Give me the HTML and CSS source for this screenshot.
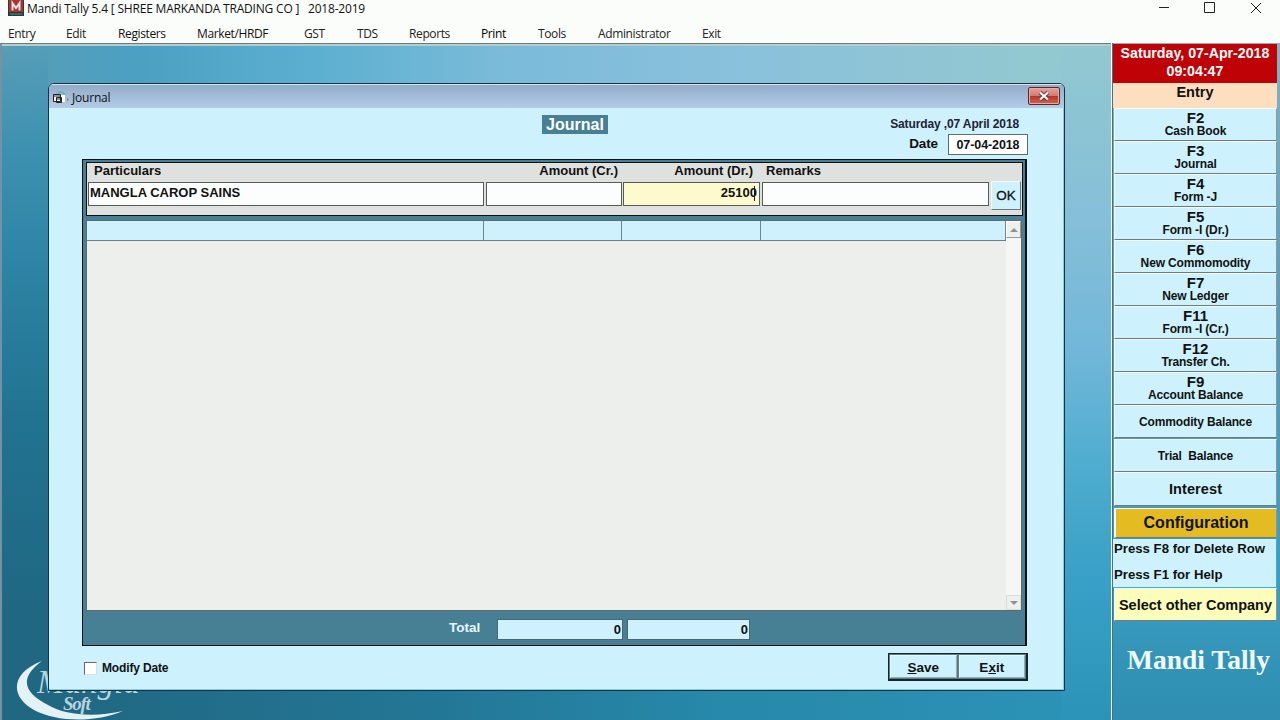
FILE: index.html
```
<!DOCTYPE html>
<html lang="en">
<head>
    <meta charset="UTF-8">
    <meta name="viewport" content="width=device-width, initial-scale=1.0">
    <title>Mandi Tally 5.4</title>
    <link rel="stylesheet" href="styles.css">
</head>
<body>
    <header class="titlebar">
        <svg class="app-icon" width="16" height="16" viewBox="0 0 16 16">
            <rect width="16" height="16" fill="#24403c"/>
            <rect x="1" y="0" width="14" height="12" fill="#a83238"/>
            <path d="M4.500 10.500V3l3.500 5L11.500 3v7.500" fill="none" stroke="#f3dedd" stroke-width="2"/>
            <path d="M2 14h12" stroke="#5d8a80"/>
        </svg>
        <span class="app-title">Mandi Tally 5.4 [ SHREE MARKANDA TRADING CO ]&nbsp;&nbsp; 2018-2019</span>
        <svg class="win-controls" width="104" height="16" viewBox="0 0 104 16">
            <path d="M1 7.500h10M46.500 2.500h10v10h-10zM93 3l10 10M103 3l-10 10" fill="none" stroke="#222"/>
        </svg>
    </header>
    <nav class="menu">
        <a class="m-entry">Entry</a>
        <a class="m-edit">Edit</a>
        <a class="m-registers">Registers</a>
        <a class="m-market">Market/HRDF</a>
        <a class="m-gst">GST</a>
        <a class="m-tds">TDS</a>
        <a class="m-reports">Reports</a>
        <a class="m-print">Print</a>
        <a class="m-tools">Tools</a>
        <a class="m-admin">Administrator</a>
        <a class="m-exit">Exit</a>
    </nav>

    <div class="main">
        <div class="desktop">
            <svg class="logo" width="150" height="65" viewBox="0 0 150 65">
                <path d="M42 6C10 18 10 42 34 55C56 67 95 68 123 56C96 62 66 61 48 50C22 37 20 22 42 6Z" fill="#e4f1f6"/>
                <text x="37" y="38" class="logo-name">Mangla</text>
                <text x="63" y="55" class="logo-soft">Soft</text>
            </svg>

            <section class="window">
                <div class="window-bar">
                    <svg width="18" height="14" viewBox="0 0 18 14">
                        <path d="M4 2.500q4-3 7 0l1 2" fill="none" stroke="#56b8bd" stroke-width="1.500"/>
                        <path d="M6 4h6v7H6z" fill="#fff"/>
                        <path d="M.5 3.500h7v7h-7zM.5 5h7M3.500 6.500h5v5h-5zM3.500 8h5" fill="#fff" stroke="#222"/>
                        <path d="M14 7l2 1.500-2 1.500z" fill="#697d90"/>
                    </svg>
                    <span class="window-name">Journal</span>
                    <button class="close">
                        <svg width="12" height="10" viewBox="0 0 12 10">
                            <path d="M2 1.500l8 7M10 1.500l-8 7" stroke="#6b3336" stroke-width="4"/>
                            <path d="M2 1.500l8 7M10 1.500l-8 7" stroke="#fff" stroke-width="2.200"/>
                        </svg>
                    </button>
                </div>

                <div class="window-body">
                    <div class="form-head">
                        <h1>Journal</h1>
                        <div class="dates">
                            <div class="long-date"><span>Saturday ,07 April 2018</span></div>
                            <div class="date-row">
                                <label>Date</label>
                                <div class="date-box"><span>07-04-2018</span></div>
                            </div>
                        </div>
                    </div>

                    <div class="panel">
                        <div class="entry-box">
                            <div class="labels">
                                <span class="c-part">Particulars</span>
                                <span class="c-cr">Amount (Cr.)</span>
                                <span class="c-dr">Amount (Dr.)</span>
                                <span class="c-rem">Remarks</span>
                            </div>
                            <div class="fields">
                                <div class="field f-part"><span>MANGLA CAROP SAINS</span></div>
                                <div class="field f-cr"></div>
                                <div class="field f-dr">25100<i class="caret"></i></div>
                                <div class="field f-rem"></div>
                                <button class="ok">OK</button>
                            </div>
                        </div>

                        <div class="grid">
                            <div class="grid-main">
                                <div class="grid-head">
                                    <div></div><div></div><div></div><div></div>
                                </div>
                            </div>
                            <div class="scroll">
                                <div class="arrow"><svg width="8" height="4"><path d="M0 4l4-4 4 4z" fill="#8f9391"/></svg></div>
                                <div class="arrow arrow-down"><svg width="8" height="4"><path d="M0 0l4 4 4-4z" fill="#8f9391"/></svg></div>
                            </div>
                        </div>

                        <div class="totals">
                            <span class="total-label">Total</span>
                            <div class="total t-cr">0</div>
                            <div class="total t-dr">0</div>
                        </div>
                    </div>

                    <div class="form-foot">
                        <span class="check"></span>
                        <label class="modify">Modify Date</label>
                        <div class="actions">
                            <button><u>S</u>ave</button>
                            <button>E<u>x</u>it</button>
                        </div>
                    </div>
                </div>
            </section>
        </div>

        <aside class="sidebar">
            <div class="clock"><span class="clock-date">Saturday, 07-Apr-2018</span><span class="clock-time">09:04:47</span></div>
            <div class="side-title">Entry</div>
            <button class="key"><b>F2</b><span>Cash Book</span></button>
            <button class="key"><b>F3</b><span>Journal</span></button>
            <button class="key"><b>F4</b><span>Form -J</span></button>
            <button class="key"><b>F5</b><span>Form -I (Dr.)</span></button>
            <button class="key"><b>F6</b><span>New Commomodity</span></button>
            <button class="key"><b>F7</b><span>New Ledger</span></button>
            <button class="key"><b>F11</b><span>Form -I (Cr.)</span></button>
            <button class="key"><b>F12</b><span>Transfer Ch.</span></button>
            <button class="key"><b>F9</b><span>Account Balance</span></button>
            <button class="key single">Commodity Balance</button>
            <button class="key single trial">Trial&nbsp; Balance</button>
            <button class="key single interest">Interest</button>
            <button class="key config">Configuration</button>
            <div class="hints"><span>Press F8 for Delete Row</span><span>Press F1 for Help</span></div>
            <button class="key company">Select other Company</button>
            <div class="brand">Mandi Tally</div>
        </aside>
    </div>
</body>
</html>
```
FILE: styles.css
```
* {
    box-sizing: border-box;
}
html, body {
    height: 100%;
    margin: 0;
    overflow: hidden;
}
body {
    display: flex;
    flex-direction: column;
    width: 1280px;
    height: 720px;
    background: #fbfdfb;
    color: #111;
    font-family: "Liberation Sans", Arial, sans-serif;
    font-size: 12px;
    font-weight: bold;
    white-space: nowrap;
}
button {
    font: inherit;
    color: inherit;
    padding: 0;
    margin: 0;
    border-radius: 0;
}
.titlebar {
    display: flex;
    align-items: flex-start;
    height: 18px;
    flex: none;
    padding-left: 8px;
    font: 12px/18px "Open Sans", "Noto Sans", sans-serif;
}
.app-title {
    margin-left: 3px;
    letter-spacing: -0.19px;
}
.win-controls {
    margin-left: auto;
    margin-right: 18px;
}
.menu {
    display: flex;
    flex: none;
    height: 25px;
    padding-left: 8px;
    font: 12px/31px "Open Sans", "Noto Sans", sans-serif;
    letter-spacing: -0.38px;
    color: #222;
}
.m-entry { width: 58px; }
.m-edit { width: 52px; }
.m-registers { width: 79px; color: #111; }
.m-market { width: 107px; color: #111; }
.m-gst { width: 53px; }
.m-tds { width: 52px; }
.m-reports { width: 72px; }
.m-print { width: 57px; color: #000; }
.m-tools { width: 60px; }
.m-admin { width: 104px; }

.main {
    display: flex;
    flex: 1;
    min-height: 0;
}
.desktop {
    position: relative;
    width: 1111px;
    border-top: 1px solid #6d7a7a;
    border-left: 2px solid #7392a6;
    box-shadow: inset 0 2px #b4cdcd;
    background:
        linear-gradient(180deg, rgba(75,155,185,0) 0%, #3e91b0 15%, #2f86a6 30%, #217391 55%, #206781 85%) left / 46px 100% no-repeat,
        linear-gradient(180deg, #92c8d0 0%, #86bfd8 25%, #72b7d9 45%, #4fadd0 62%, #389fc6 80%, #2c93b8 100%) right / 50px 100% no-repeat,
        linear-gradient(90deg, #206781 4%, #237695 38%, #2789ab 65%, #2c93b8 100%) bottom / 100% 40px no-repeat,
        linear-gradient(90deg, #5a9db5 0%, #4ba0c2 12%, #5cafd0 28%, #7abbd9 45%, #89c0dc 65%, #92c8d0 92%);
}

/* company logo, partly under the journal window */
.logo {
    position: absolute;
    left: -2px;
    top: 611px;
}
.logo-name {
    font: italic 33px "Liberation Serif", serif;
    fill: #b9d3dd;
}
.logo-soft {
    font: italic bold 19px "Liberation Serif", serif;
    letter-spacing: -1.3px;
    fill: #b9d3dd;
}

.window {
    position: absolute;
    left: 46px;
    top: 39px;
    width: 1017px;
    height: 608px;
    border: 1px solid #18333f;
    border-radius: 6px 6px 0 0;
    background: #cdf1fd;
    box-shadow: inset -1px -1px #8ccbdd;
    overflow: hidden;
}
.window-bar {
    display: flex;
    align-items: center;
    height: 24px;
    padding: 2px 4px 0 4px;
    border-top: 1px solid #d5e5ef;
    background: linear-gradient(#92acc9, #b4cce6);
}
.window-name {
    margin-left: 1px;
    font: 12px "Open Sans", "Noto Sans", sans-serif;
    letter-spacing: -0.2px;
}
.close {
    display: flex;
    align-items: center;
    justify-content: center;
    margin: -3px 0 0 auto;
    width: 32px;
    height: 18px;
    border: 1px solid #552a30;
    border-radius: 2px;
    background: linear-gradient(#e4a49b 0%, #d17b70 48%, #b83324 50%, #cf6552 100%);
    box-shadow: inset 0 0 0 1px #e7aaa0;
}
.window-body {
    padding: 0 36px 0 33px;
}
.form-head {
    display: flex;
    height: 51px;
}
h1 {
    width: 66px;
    height: 19px;
    margin: 7px 0 0 460px;
    background: #477f95;
    color: #fff;
    font-size: 16px;
    line-height: 19px;
    text-align: center;
}
.dates {
    margin-left: auto;
    width: 160px;
}
.long-date {
    height: 26px;
    padding-right: 9px;
    line-height: 33px;
    text-align: right;
    letter-spacing: -0.12px;
    color: #223;
}
.date-row {
    display: flex;
    justify-content: flex-end;
    font-size: 13.5px;
    letter-spacing: -0.1px;
    line-height: 20px;
}
.date-box {
    width: 80px;
    height: 21px;
    margin-left: 10px;
    border: 1px solid #5e6b70;
    background: #fff;
    font-size: 12.5px;
    text-align: center;
}
.panel {
    width: 945px;
    height: 487px;
    padding: 2px 3px 0;
    border: 1px solid #111;
    border-width: 1px 2px 1px 1px;
    background: #477f95;
}
.entry-box {
    width: 937px;
    height: 54px;
    border: 1px solid #111;
    background: #dfe1de;
}
.labels {
    display: flex;
    height: 19px;
    font-size: 13px;
    line-height: 16px;
}
.c-part { width: 398px; padding-left: 7px; }
.c-cr { width: 133px; text-align: right; }
.c-dr { width: 135px; text-align: right; }
.c-rem { margin-left: 13px; }
.fields {
    display: flex;
    padding-left: 1px;
}
.field {
    height: 24px;
    border: 1px solid #565c5c;
    background: #fcfefd;
    font-size: 13px;
    line-height: 19px;
    padding: 0 2px 0 1px;
}
.f-part { width: 396px; margin-right: 2px; }
.f-cr { width: 136px; margin-right: 1px; }
.f-dr { width: 137px; margin-right: 2px; background: #fdfbcd; text-align: right; position: relative; }
.f-rem { width: 227px; margin-right: 2px; }
.caret {
    position: absolute;
    right: 4px;
    top: 3px;
    width: 1px;
    height: 15px;
    background: #001e50;
}
.ok {
    width: 30px;
    height: 29px;
    margin-top: -1px;
    border: 1px solid;
    border-color: #f4fafa #6c7777 #6c7777 #f4fafa;
    background: #cdf1fd;
    font-size: 13.5px;
    font-weight: normal;
    -webkit-text-stroke: 0.3px #111;
}
.grid {
    display: flex;
    width: 936px;
    height: 391px;
    margin: 4px 0 0 0;
    border: 1px solid #5e6a6c;
    background: #edefed;
}
.grid-main {
    width: 919px;
}
.grid-head {
    display: flex;
    height: 20px;
    border-bottom: 1px solid #6b7f84;
    background: #cdf1fd;
}
.grid-head div {
    width: 139px;
    border-right: 1px solid #6b8890;
}
.grid-head div:first-child { width: 397px; }
.grid-head div:nth-child(2) { width: 138px; }
.grid-head div:last-child { width: 245px; }
.scroll {
    display: flex;
    flex-direction: column;
    justify-content: space-between;
    width: 15px;
    background: #f6f6f5;
}
.arrow {
    display: flex;
    align-items: center;
    justify-content: center;
    height: 17px;
    border: 1px solid;
    border-color: #fff #999 #999 #fff;
    background: #eef0ee;
}
.arrow-down {
    height: 15px;
    border-color: #ddd;
}
.totals {
    display: flex;
    padding: 8px 0 0 363px;
    font-size: 13px;
}
.total-label {
    width: 48px;
    color: #e5f8fc;
    font-size: 13.5px;
    line-height: 17px;
}
.total {
    width: 126px;
    height: 21px;
    padding-right: 1px;
    border: 1px solid #536368;
    background: #cdf1fd;
    line-height: 20px;
    text-align: right;
}
.t-dr { width: 123px; margin-left: 4px; }
.form-foot {
    display: flex;
    padding: 7px 0 0 2px;
}
.check {
    width: 13px;
    height: 13px;
    margin: 9px 5px 0 0;
    border: 1px solid;
    border-color: #666 #ddd #ddd #666;
    background: #fff;
}
.modify {
    line-height: 30px;
    letter-spacing: -0.15px;
}
.actions {
    display: flex;
    gap: 2px;
    width: 140px;
    height: 28px;
    margin-left: auto;
    padding: 1px;
    border: 2px solid #14252d;
    border-width: 1px 2px 2px 1px;
    background: #5c7c88;
}
.actions button {
    flex: 1;
    border: 1px solid #b9d6df;
    border-color: #e6f8fc #93aab2 #93aab2 #e6f8fc;
    background: #cdf1fd;
    font-size: 13.5px;
    line-height: 24px;
}

.sidebar {
    display: flex;
    flex-direction: column;
    width: 169px;
    padding: 1px 3px 0 1px;
    border-left: 1px solid #f3fbfc;
    background: linear-gradient(#7eb5c7, #5a9ab5 40%, #3a9dc1 80%, #2e8db0);
    box-shadow: inset 1px 0 #4c707c;
    text-align: center;
}
.clock {
    display: flex;
    flex-direction: column;
    height: 39px;
    background: #bf0206;
    color: #fff;
    font-size: 14.2px;
    line-height: 18px;
}
.side-title {
    height: 25px;
    background: #fddfc0;
    font-size: 14.5px;
    line-height: 18px;
}
.key {
    display: flex;
    flex-direction: column;
    align-items: center;
    height: 33px;
    margin: 0 0 0 1px;
    border: 1px solid;
    border-color: #f2fcff #8a9898 #6f7b7b #f2fcff;
    background: #cdf1fd;
    font-size: 12px;
    letter-spacing: -0.15px;
    line-height: 12px;
}
.key b {
    font-size: 15px;
    line-height: 16px;
    letter-spacing: 0;
    padding-top: 1px;
    margin-bottom: -1px;
}
.single {
    justify-content: center;
}
.trial { margin-top: 1px; }
.interest {
    height: 34px;
    margin-bottom: 2px;
    font-size: 14.5px;
    letter-spacing: 0.1px;
}
.config {
    justify-content: center;
    height: 30px;
    background: #e4bb20;
    font-size: 16px;
    letter-spacing: 0;
    border-left-width: 2px;
}
.hints {
    display: flex;
    flex-direction: column;
    height: 49px;
    margin-top: 1px;
    padding-left: 1px;
    background: #cdf1fd;
    border-right: 1px solid #38aed2;
    border-bottom: 1px solid #38aed2;
    font-size: 13.2px;
    line-height: 26px;
    text-align: left;
}
.hints span:first-child {
    margin-top: -3px;
}
.company {
    justify-content: center;
    background: #fcfcbb;
    font-size: 14.5px;
    letter-spacing: 0;
}
.brand {
    margin-top: 24px;
    padding-left: 7px;
    color: #effcff;
    font: bold 27.5px/30px "Liberation Serif", serif;
}
```
